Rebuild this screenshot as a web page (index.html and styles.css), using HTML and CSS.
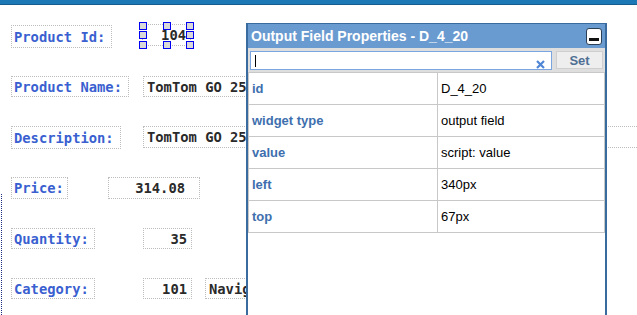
FILE: index.html
```html
<!DOCTYPE html>
<html lang="en">
<head>
    <meta charset="UTF-8">
    <title>Form Designer - Product</title>
    <link rel="stylesheet" href="styles.css">
</head>
<body>
    <div class="topbar"></div>
    <div class="canvas">
        <div class="guide"></div>

        <div class="widget label" style="left: 11px; top: 20px; width: 101px; height: 23px;">Product Id:</div>
        <div class="widget value num selected" style="left: 142px; top: 19px; width: 49px; height: 22px; padding-right: 4px;">104
            <span class="handle tl"></span><span class="handle tc"></span><span class="handle tr"></span>
            <span class="handle ml"></span><span class="handle mr"></span>
            <span class="handle bl"></span><span class="handle bc"></span><span class="handle br"></span>
        </div>

        <div class="widget label" style="left: 11px; top: 71px; width: 118px; height: 21px;">Product Name:</div>
        <div class="widget value" style="left: 143px; top: 71px; width: 300px; height: 21px;">TomTom GO 2535 M WTE</div>

        <div class="widget label" style="left: 11px; top: 121px; width: 110px; height: 23px;">Description:</div>
        <div class="widget value" style="left: 143px; top: 121px; width: 520px; height: 22px;">TomTom GO 2535 M WTE Europe 5" navigation</div>

        <div class="widget label" style="left: 11px; top: 172px; width: 57px; height: 22px;">Price:</div>
        <div class="widget value num" style="left: 108px; top: 172px; width: 92px; height: 22px; padding-right: 14px;">314.08</div>

        <div class="widget label" style="left: 11px; top: 223px; width: 84px; height: 21px;">Quantity:</div>
        <div class="widget value num" style="left: 143px; top: 223px; width: 49px; height: 21px;">35</div>

        <div class="widget label" style="left: 11px; top: 273px; width: 84px; height: 21px;">Category:</div>
        <div class="widget value num" style="left: 143px; top: 273px; width: 49px; height: 21px;">101</div>
        <div class="widget value" style="left: 205px; top: 273px; width: 200px; height: 21px;">Navigation</div>

        <div class="props">
            <div class="props-title">
                <span>Output Field Properties - D_4_20</span>
                <button class="min-btn"><span></span></button>
            </div>
            <div class="props-search">
                <div class="search-box">
                    <span class="caret"></span>
                    <svg class="clear" width="9" height="9" viewBox="0 0 9 9">
                        <path d="M1 1 L8 8 M8 1 L1 8" stroke="#4f86d6" stroke-width="2.2"/>
                    </svg>
                </div>
                <button class="set-btn">Set</button>
            </div>
            <table class="props-table">
                <tr><td class="key">id</td><td>D_4_20</td></tr>
                <tr><td class="key">widget type</td><td>output field</td></tr>
                <tr><td class="key">value</td><td>script: value</td></tr>
                <tr><td class="key">left</td><td>340px</td></tr>
                <tr><td class="key">top</td><td>67px</td></tr>
            </table>
        </div>
    </div>
</body>
</html>
```

FILE: styles.css
```css
body {
    margin: 0;
    background: #fff;
    font-family: 'Liberation Sans', Arial, sans-serif;
    overflow: hidden;
}
.topbar {
    height: 4px;
    background: #1d78b6;
    border-bottom: 1px solid #145d8e;
}
.canvas {
    position: relative;
    height: 310px;
}
.guide {
    position: absolute;
    left: 1px;
    top: 189px;
    bottom: 0;
    border-left: 1px dotted #1a2a80;
}
.widget {
    position: absolute;
    box-sizing: border-box;
    border: 1px dotted #bdbdbd;
    display: flex;
    align-items: center;
    padding: 0 2px;
    font-family: 'DejaVu Sans Mono', monospace;
    font-weight: bold;
    font-size: 13.8px;
    white-space: nowrap;
}
.label {
    color: #3a5fd0;
}
.value {
    color: #2a2a2a;
    padding-left: 3px;
    overflow: hidden;
}
.num {
    justify-content: flex-end;
    padding-right: 4px;
}
.selected {
    overflow: visible;
}
.handle {
    position: absolute;
    width: 6px;
    height: 6px;
    border: 1px solid #0000f0;
    background: #d9d9d9;
}
.tl { left: -4px; top: -3px; }
.tc { left: calc(50% - 4px); top: -3px; }
.tr { right: -4px; top: -3px; }
.ml { left: -4px; top: calc(50% - 4px); }
.mr { right: -4px; top: calc(50% - 4px); }
.bl { left: -4px; bottom: -4px; }
.bc { left: calc(50% - 4px); bottom: -4px; }
.br { right: -4px; bottom: -4px; }

.props {
    position: absolute;
    left: 246px;
    top: 18px;
    width: 361px;
    height: 310px;
    box-sizing: border-box;
    border: 2px solid #3a6b9e;
    border-top-width: 1px;
    background: #fff;
}
.props-title {
    height: 24px;
    background: #6a9bd0;
    color: #fff;
    font-weight: bold;
    font-size: 14px;
    display: flex;
    align-items: center;
    justify-content: space-between;
    padding: 0 3px 0 3px;
}
.min-btn {
    width: 16px;
    height: 17px;
    margin-top: 1px;
    padding: 0;
    border: 1px solid #2b3f55;
    border-radius: 3px;
    background: #fff;
    display: flex;
    align-items: flex-end;
    justify-content: center;
}
.min-btn span {
    width: 10px;
    height: 3px;
    margin-bottom: 3px;
    background: #111;
}
.props-search {
    height: 24px;
    background: #dedede;
    display: flex;
    align-items: center;
    padding: 0 2px;
    gap: 4px;
}
.search-box {
    position: relative;
    width: 302px;
    height: 19px;
    box-sizing: border-box;
    border: 1px solid #7aa5df;
    background: #fff;
}
.caret {
    position: absolute;
    left: 4px;
    top: 3px;
    width: 1px;
    height: 12px;
    background: #000;
}
.clear {
    position: absolute;
    right: 6px;
    top: 8px;
}
.set-btn {
    width: 47px;
    height: 18px;
    padding: 0;
    border: 1px solid #cfcfcf;
    background: #eeeeee;
    color: #4f6f94;
    font-family: 'Liberation Sans', Arial, sans-serif;
    font-weight: bold;
    font-size: 13px;
}
.props-table {
    width: 357px;
    border-collapse: collapse;
    font-size: 13px;
}
.props-table td {
    height: 31px;
    padding: 0 3px;
    border: 1px solid #c8c8c8;
    color: #000;
}
.props-table td.key {
    width: 182px;
    color: #3e6fae;
    font-weight: bold;
}
```
